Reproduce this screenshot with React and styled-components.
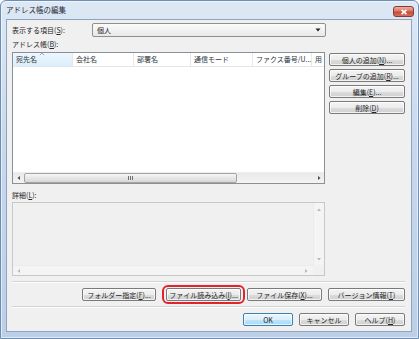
import styled, { createGlobalStyle } from "styled-components";

const GlobalStyle = createGlobalStyle`
  html, body {
    margin: 0;
    padding: 0;
    background: #ffffff;
  }
  body {
    font-family: "Noto Sans CJK JP", "Noto Sans", sans-serif;
    font-size: 7px;
    color: #262626;
  }
  * {
    box-sizing: border-box;
  }
`;

const columns = [
  { label: "宛先名", width: 60, sorted: true },
  { label: "会社名", width: 61 },
  { label: "部署名", width: 57 },
  { label: "通信モード", width: 62 },
  { label: "ファクス番号/U...", width: 59 },
  { label: "用", width: 14 },
];

function Mnemonic({ text, letter, suffix = "" }) {
  return (
    <>
      {text}(<u>{letter}</u>){suffix}
    </>
  );
}

function ArrowIcon({ dir, faded }) {
  const paths = {
    up: "M1 4 L3 1.5 L5 4 Z",
    down: "M1 2 L3 4.5 L5 2 Z",
    left: "M4 1 L1.5 3 L4 5 Z",
    right: "M2 1 L4.5 3 L2 5 Z",
  };
  return (
    <svg width="6" height="6" viewBox="0 0 6 6">
      <path d={paths[dir]} fill={faded ? "#b8b8b8" : "#4d4d4d"} />
    </svg>
  );
}

function App() {
  return (
    <>
      <GlobalStyle />
      <Window>
        <TitleBar>
          <TitleText>アドレス帳の編集</TitleText>
          <CloseButton>
            <svg width="8" height="6" viewBox="0 0 8 6">
              <path
                d="M1.5 0.8 L6.5 5.2 M6.5 0.8 L1.5 5.2"
                stroke="#ffffff"
                strokeWidth="1.6"
              />
            </svg>
          </CloseButton>
        </TitleBar>
        <Client>
          <SelectRow>
            <FieldLabel>
              <Mnemonic text="表示する項目" letter="S" suffix=":" />
            </FieldLabel>
            <ComboBox>
              <span>個人</span>
              <svg width="6" height="4" viewBox="0 0 6 4">
                <path d="M0.5 0.5 L5.5 0.5 L3 3.5 Z" fill="#222" />
              </svg>
            </ComboBox>
          </SelectRow>
          <SectionLabel>
            <Mnemonic text="アドレス帳" letter="B" suffix=":" />
          </SectionLabel>
          <MainArea>
            <ListView>
              <HeaderRow>
                {columns.map((col) => (
                  <HeaderCell
                    key={col.label}
                    $width={col.width}
                    $sorted={col.sorted}
                  >
                    {col.label}
                    {col.sorted && (
                      <SortMark>
                        <svg width="6" height="4" viewBox="0 0 6 4">
                          <path
                            d="M0.8 3.2 L3 1 L5.2 3.2"
                            stroke="#8aa0b8"
                            strokeWidth="0.9"
                            fill="none"
                          />
                        </svg>
                      </SortMark>
                    )}
                  </HeaderCell>
                ))}
              </HeaderRow>
              <ListBody />
              <HScroll>
                <ScrollArrow>
                  <ArrowIcon dir="left" />
                </ScrollArrow>
                <ScrollTrack>
                  <Thumb>
                    <Grip />
                  </Thumb>
                </ScrollTrack>
                <ScrollArrow>
                  <ArrowIcon dir="right" />
                </ScrollArrow>
              </HScroll>
            </ListView>
            <SideButtons>
              <Button>
                <Mnemonic text="個人の追加" letter="N" suffix="..." />
              </Button>
              <Button>
                <Mnemonic text="グループの追加" letter="R" suffix="..." />
              </Button>
              <Button>
                <Mnemonic text="編集" letter="E" suffix="..." />
              </Button>
              <Button>
                <Mnemonic text="削除" letter="D" />
              </Button>
            </SideButtons>
          </MainArea>
          <DetailLabel>
            <Mnemonic text="詳細" letter="L" suffix=":" />
          </DetailLabel>
          <DetailBox>
            <DetailMain>
              <DetailText />
              <VScroll>
                <ArrowIcon dir="up" faded />
                <ArrowIcon dir="down" faded />
              </VScroll>
            </DetailMain>
            <DetailHScroll>
              <DetailHTrack>
                <ArrowIcon dir="left" faded />
                <ArrowIcon dir="right" faded />
              </DetailHTrack>
              <Corner />
            </DetailHScroll>
          </DetailBox>
          <Separator />
          <ButtonRow>
            <Button $width={74}>
              <Mnemonic text="フォルダー指定" letter="F" suffix="..." />
            </Button>
            <Button $width={75} $highlight>
              <Mnemonic text="ファイル読み込み" letter="I" suffix="..." />
            </Button>
            <Button $width={75}>
              <Mnemonic text="ファイル保存" letter="X" suffix="..." />
            </Button>
            <Button $width={77}>
              <Mnemonic text="バージョン情報" letter="T" />
            </Button>
          </ButtonRow>
          <Separator />
          <ButtonRow>
            <Button $width={50} $default>
              OK
            </Button>
            <Button $width={50}>キャンセル</Button>
            <Button $width={50}>
              <Mnemonic text="ヘルプ" letter="H" />
            </Button>
          </ButtonRow>
        </Client>
      </Window>
    </>
  );
}

const Window = styled.div`
  width: 419px;
  height: 339px;
  display: flex;
  flex-direction: column;
  background: linear-gradient(180deg, #dde8f4 0%, #c9d9ec 40%, #bccfe6 100%);
  border: 1px solid #6c8db4;
  border-radius: 6px 6px 0 0;
  box-shadow: inset 0 0 0 1px rgba(255, 255, 255, 0.55);
`;

const TitleBar = styled.div`
  height: 18px;
  display: flex;
  align-items: flex-start;
  justify-content: space-between;
  padding: 0 4px 0 5px;
`;

const TitleText = styled.span`
  margin-top: 3px;
  font-size: 7.5px;
  line-height: 11px;
  color: #1e2a38;
`;

const CloseButton = styled.div`
  width: 21px;
  height: 11px;
  margin-top: 5px;
  display: flex;
  align-items: center;
  justify-content: center;
  border: 1px solid #8b3a30;
  border-radius: 3px;
  background: linear-gradient(180deg, #eab0a4 0%, #d87866 45%, #c44a36 55%, #d6705a 100%);
`;

const Client = styled.div`
  flex: 1;
  margin: 0 6px 6px 5px;
  display: flex;
  flex-direction: column;
  padding: 3px 6px 0 5px;
  background: #f0f0f0;
  border: 1px solid #8da5c3;
`;

const SelectRow = styled.div`
  display: flex;
  align-items: center;
  height: 14px;
`;

const FieldLabel = styled.span`
  width: 80px;
  line-height: 14px;
`;

const ComboBox = styled.div`
  width: 234px;
  height: 14px;
  display: flex;
  align-items: center;
  justify-content: space-between;
  padding: 0 4px 0 4px;
  border: 1px solid #8e8f8f;
  border-radius: 2px;
  background: linear-gradient(180deg, #fbfbfb 0%, #f2f2f2 50%, #e8e8e8 100%);
`;

const SectionLabel = styled.div`
  height: 15px;
  line-height: 15px;
`;

const MainArea = styled.div`
  display: flex;
  gap: 4px;
`;

const ListView = styled.div`
  width: 313px;
  height: 132px;
  display: flex;
  flex-direction: column;
  background: #ffffff;
  border: 1px solid #8a9099;
`;

const HeaderRow = styled.div`
  display: flex;
  height: 14px;
  border-bottom: 1px solid #e3e6ea;
`;

const HeaderCell = styled.div`
  position: relative;
  width: ${({ $width }) => $width}px;
  flex-shrink: 0;
  padding-left: 3px;
  line-height: 13px;
  color: #2d3540;
  white-space: nowrap;
  overflow: hidden;
  border-right: 1px solid #e5e8ec;
  background: ${({ $sorted }) =>
    $sorted ? "linear-gradient(180deg, #eef7fd 0%, #dbeefa 100%)" : "#ffffff"};
  &:last-child {
    border-right: none;
    flex: 1;
  }
`;

const SortMark = styled.span`
  position: absolute;
  top: -1px;
  left: 26px;
  line-height: 0;
`;

const ListBody = styled.div`
  flex: 1;
`;

const HScroll = styled.div`
  height: 11px;
  display: flex;
  align-items: center;
  background: linear-gradient(180deg, #e9e9e9 0%, #f4f4f4 100%);
  border-top: 1px solid #eeeeee;
`;

const ScrollArrow = styled.div`
  width: 11px;
  height: 100%;
  display: flex;
  align-items: center;
  justify-content: center;
`;

const ScrollTrack = styled.div`
  flex: 1;
  height: 100%;
  display: flex;
  align-items: center;
`;

const Thumb = styled.div`
  width: 213px;
  height: 10px;
  display: flex;
  align-items: center;
  justify-content: center;
  border: 1px solid #a4a4a4;
  border-radius: 2px;
  background: linear-gradient(180deg, #f6f6f6 0%, #e6e6e6 50%, #d8d8d8 100%);
`;

const Grip = styled.div`
  width: 5px;
  height: 4px;
  background: repeating-linear-gradient(
    90deg,
    #6f6f6f 0,
    #6f6f6f 1px,
    transparent 1px,
    transparent 2px
  );
`;

const SideButtons = styled.div`
  width: 76px;
  display: flex;
  flex-direction: column;
  gap: 3px;
  padding-top: 1px;
`;

const Button = styled.div`
  position: relative;
  ${({ $width }) => ($width ? `width: ${$width}px;` : "")}
  height: 13px;
  display: flex;
  align-items: center;
  justify-content: center;
  white-space: nowrap;
  color: #262626;
  border: 1px solid ${({ $default }) => ($default ? "#3c7fb1" : "#7a7a7a")};
  border-radius: 2px;
  background: ${({ $default }) =>
    $default
      ? "linear-gradient(180deg, #eaf6fd 0%, #d9f0fc 50%, #bee6fd 51%, #a7d9f5 100%)"
      : "linear-gradient(180deg, #f4f4f4 0%, #ececec 50%, #dddddd 51%, #d0d0d0 100%)"};
  box-shadow: inset 0 0 0 1px rgba(255, 255, 255, 0.7);
  ${({ $highlight }) =>
    $highlight &&
    `
    margin-left: 4px;
    &::after {
      content: "";
      position: absolute;
      inset: -4px -5px -4px -5px;
      border: 2px solid #e2232c;
      border-radius: 6px;
    }
  `}
`;

const DetailLabel = styled.div`
  height: 18px;
  padding-top: 5px;
  line-height: 13px;
`;

const DetailBox = styled.div`
  width: 313px;
  height: 74px;
  display: flex;
  flex-direction: column;
  border: 1px solid #c8c8c8;
  background: #f0f0f0;
`;

const DetailMain = styled.div`
  flex: 1;
  display: flex;
`;

const DetailText = styled.div`
  flex: 1;
`;

const VScroll = styled.div`
  width: 11px;
  display: flex;
  flex-direction: column;
  align-items: center;
  justify-content: space-between;
  padding: 4px 0 3px;
  background: #f4f4f4;
  border-left: 1px solid #ebebeb;
`;

const DetailHScroll = styled.div`
  height: 10px;
  display: flex;
`;

const DetailHTrack = styled.div`
  flex: 1;
  display: flex;
  align-items: center;
  justify-content: space-between;
  padding: 0 4px 0 3px;
  background: #f4f4f4;
  border-top: 1px solid #ebebeb;
`;

const Corner = styled.div`
  width: 11px;
  background: #f0f0f0;
`;

const Separator = styled.div`
  height: 2px;
  margin-top: 5px;
  border-top: 1px solid #d3d3d3;
  border-bottom: 1px solid #fdfdfd;
`;

const ButtonRow = styled.div`
  display: flex;
  justify-content: flex-end;
  gap: 6px;
  margin-top: 5px;
`;

export default App;
